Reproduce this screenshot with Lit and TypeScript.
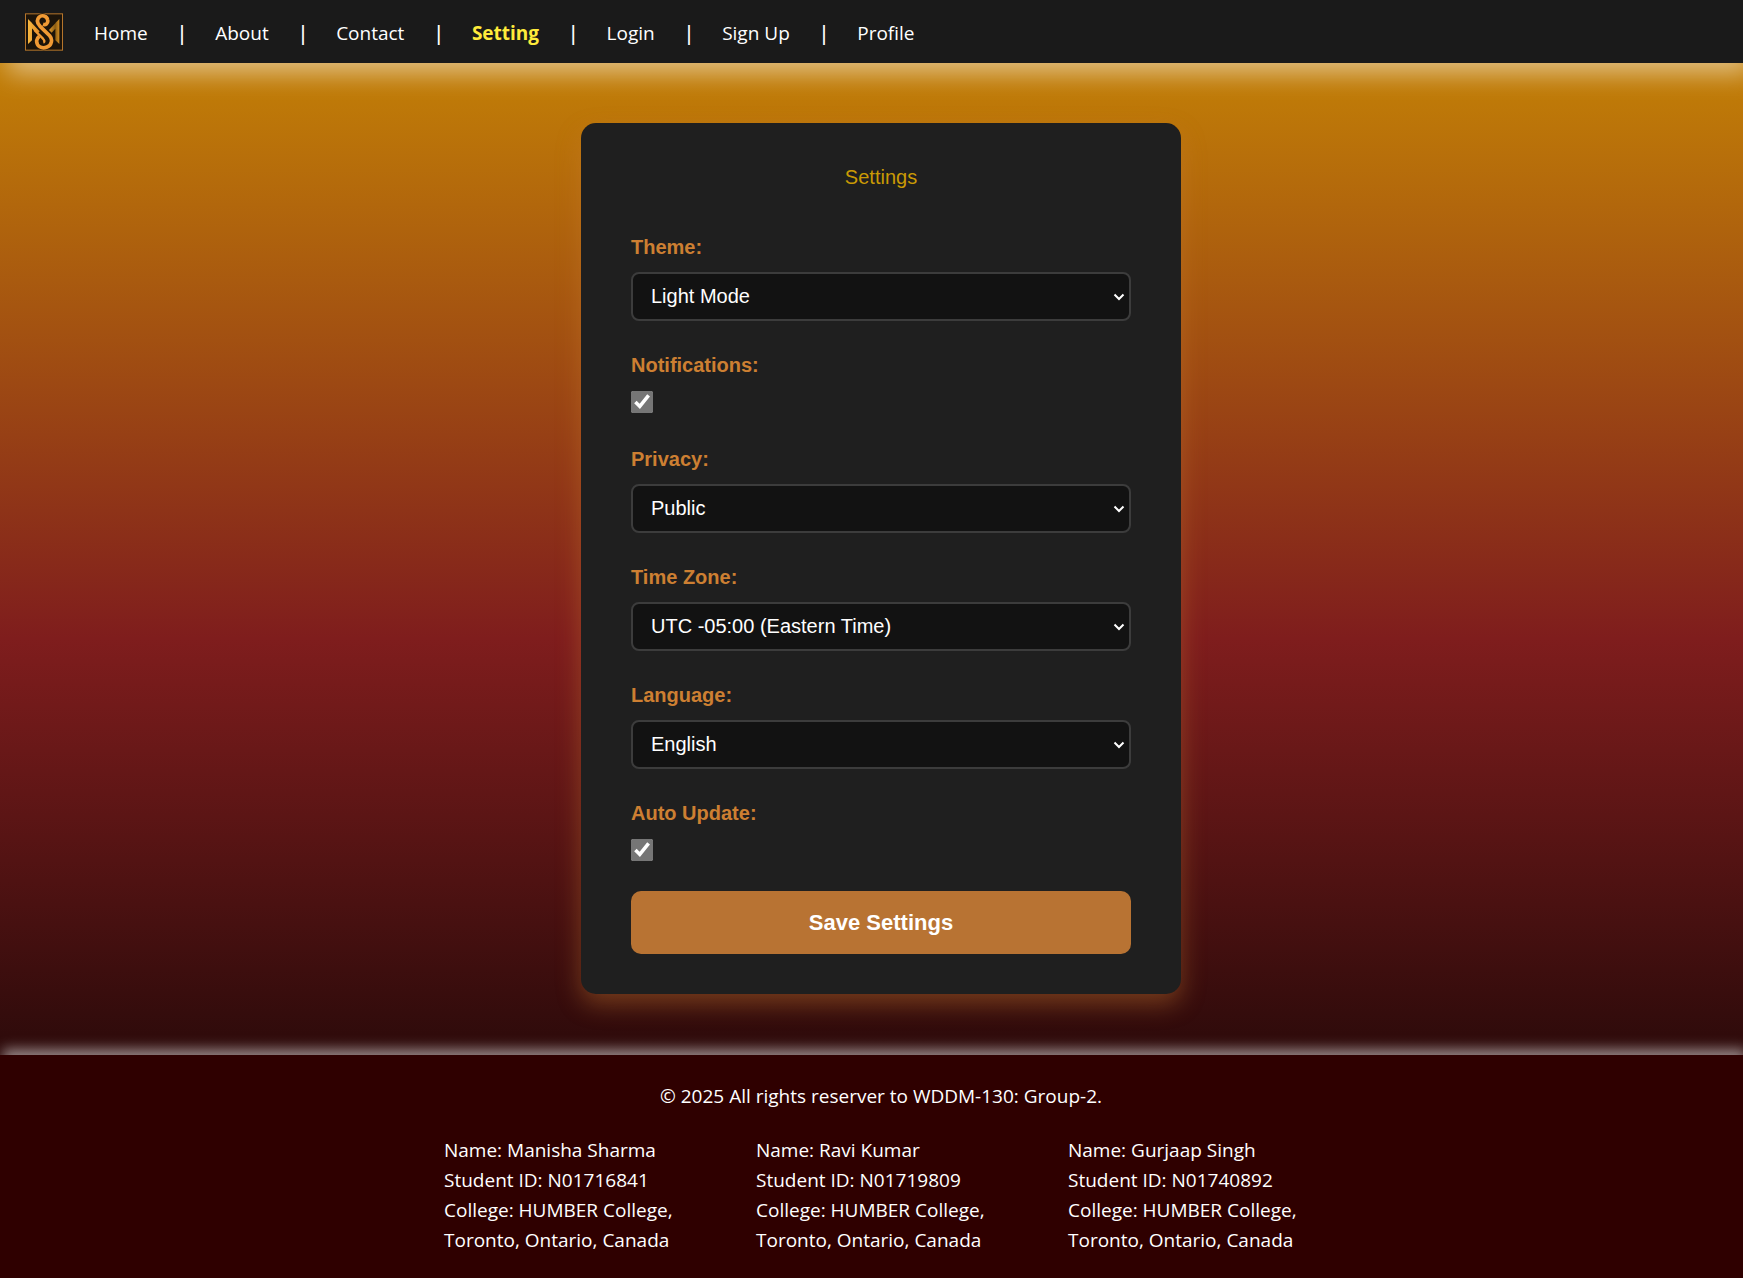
import { LitElement, html, css, svg } from "lit";
import { customElement } from "lit/decorators.js";

const NAV = ["Home", "About", "Contact", "Setting", "Login", "Sign Up", "Profile"];

const STUDENTS = [
  { name: "Manisha Sharma", id: "N01716841" },
  { name: "Ravi Kumar", id: "N01719809" },
  { name: "Gurjaap Singh", id: "N01740892" },
];

type Field = { id: string; label: string; options?: string[] };

const FIELDS: Field[] = [
  { id: "theme", label: "Theme:", options: ["Light Mode"] },
  { id: "notifications", label: "Notifications:" },
  { id: "privacy", label: "Privacy:", options: ["Public"] },
  { id: "timezone", label: "Time Zone:", options: ["UTC -05:00 (Eastern Time)"] },
  { id: "language", label: "Language:", options: ["English"] },
  { id: "auto-update", label: "Auto Update:" },
];

const monogram = svg`
  <defs>
    <linearGradient id="side" x1="0" x2="1" y1="0" y2="0">
      <stop offset="0" stop-color="#f8b840"></stop>
      <stop offset="1" stop-color="#e08a24"></stop>
    </linearGradient>
    <linearGradient id="far" x1="0" x2="1" y1="0" y2="0">
      <stop offset="0" stop-color="#e09a2c"></stop>
      <stop offset="0.6" stop-color="#8a5c12"></stop>
      <stop offset="1" stop-color="#d08c22"></stop>
    </linearGradient>
  </defs>
  <rect x="1.5" y="1.5" width="111" height="109" fill="#1c140a" stroke="#b5752b" stroke-width="3"></rect>
  <path d="M9 17 L21 29 V81 L9 92 Z M9 17 L44 54 L37 62 L9 33 Z" fill="url(#side)"></path>
  <path d="M103 17 L91 29 V81 L103 92 Z M103 17 L72 50 L80 58 L103 33 Z" fill="url(#far)"></path>
  <path d="M54 33 C62 36 70 30 68 20 C66 8 50 3 42 12 C33 22 38 32 46 40 L74 67 C84 78 80 96 66 101 C50 108 34 98 35 82 C36 76 39 72 43 69"
    fill="none" stroke="#1c140a" stroke-width="15"></path>
  <path d="M54 33 C62 36 70 30 68 20 C66 8 50 3 42 12 C33 22 38 32 46 40 L74 67 C84 78 80 96 66 101 C50 108 34 98 35 82 C36 76 39 72 43 69"
    fill="none" stroke="#f09a34" stroke-width="11"></path>
  <path d="M28 50 L54 76 Q62 85 55 88" fill="none" stroke="#f09a34" stroke-width="7"></path>
`;

@customElement("app-root")
export class AppRoot extends LitElement {
  static styles = css`
    :host {
      display: flex;
      flex-direction: column;
      min-height: 100vh;
      background: linear-gradient(180deg, #ca8a04, #7f1d1d 50%, #000);
      color: #fff;
      font-family: "Segoe UI", "Open Sans", "Noto Sans", sans-serif;
      font-size: 19px;
    }
    * {
      box-sizing: border-box;
    }
    .header {
      display: flex;
      align-items: center;
      gap: 31px;
      height: 63px;
      padding: 0 25px;
      background: #1a1a1a;
      box-shadow: 8px 10px 26px rgba(255, 255, 255, 0.5);
    }
    .logo {
      display: block;
      width: 38px;
      height: 38px;
    }
    .menu {
      display: flex;
      align-items: center;
      gap: 29px;
      margin: 0;
      padding: 2px 0 0;
      list-style: none;
      line-height: 30px;
    }
    .item {
      display: flex;
      gap: 28px;
    }
    .item + .item::before {
      content: "|";
      font-weight: 600;
    }
    .link {
      color: #fff;
      text-decoration: none;
    }
    .active {
      color: #ffeb3b;
      font-weight: 700;
    }
    .main {
      display: flex;
      flex: 1;
      justify-content: center;
      align-items: flex-start;
      padding: 60px 0 59px 19px;
    }
    .card {
      width: 600px;
      max-width: 100%;
      padding: 43px 50px 40px;
      border-radius: 15px;
      background: #1f1f1f;
      box-shadow: 0 10px 25px rgba(205, 127, 50, 0.4);
      font-family: Arial, "Liberation Sans", sans-serif;
      font-size: 20px;
      line-height: 23px;
    }
    .title {
      margin: 0 0 47px;
      color: #ca9a04;
      font-size: 20px;
      font-weight: 400;
      text-align: center;
    }
    .form {
      display: flex;
      flex-direction: column;
      gap: 33px;
    }
    .field {
      display: flex;
      flex-direction: column;
      align-items: flex-start;
      gap: 13px;
    }
    .label {
      color: #cd7f32;
      font-weight: 700;
    }
    .picker {
      display: grid;
      align-items: center;
      width: 100%;
    }
    .select {
      grid-area: 1 / 1;
      width: 100%;
      height: 49px;
      padding: 0 30px 0 18px;
      border: 2px solid #3c3c3c;
      border-radius: 8px;
      background: #121212;
      color: #fff;
      font: inherit;
      appearance: none;
    }
    .chevron {
      grid-area: 1 / 1;
      justify-self: end;
      width: 12px;
      height: 8px;
      margin-right: 6px;
      fill: none;
      stroke: #fff;
      stroke-width: 2;
      pointer-events: none;
    }
    .check {
      width: 22px;
      height: 22px;
      margin: 1px 0 2px;
      accent-color: #767676;
    }
    .save {
      height: 63px;
      margin-top: -5px;
      border: 0;
      border-radius: 10px;
      background: #b87333;
      color: #fff;
      font: 700 22px Arial, "Liberation Sans", sans-serif;
    }
    .footer {
      display: flex;
      flex-direction: column;
      align-items: center;
      gap: 24px;
      padding: 26px 0 23px 19px;
      background: #2f0000;
      box-shadow: 3px -6px 12px rgba(255, 255, 255, 0.5);
      line-height: 30px;
    }
    .copy {
      margin: 0;
    }
    .people {
      display: grid;
      grid-template-columns: repeat(3, 250px);
      gap: 62px;
    }
    .person {
      margin: 0;
      white-space: nowrap;
    }
  `;

  private renderField(field: Field) {
    return html`
      <div class="field">
        <label class="label" for=${field.id}>${field.label}</label>
        ${field.options
          ? html`<div class="picker">
              <select class="select" id=${field.id}>
                ${field.options.map((option) => html`<option>${option}</option>`)}
              </select>
              <svg class="chevron" viewBox="0 0 12 8" aria-hidden="true">
                <path d="M1.5 1.5 L6 6 L10.5 1.5"></path>
              </svg>
            </div>`
          : html`<input class="check" id=${field.id} type="checkbox" checked />`}
      </div>
    `;
  }

  render() {
    return html`
      <header class="header">
        <svg class="logo" viewBox="0 0 114 112" aria-hidden="true">${monogram}</svg>
        <nav>
          <ul class="menu">
            ${NAV.map(
              (name) => html`<li class="item">
                <a class="link ${name === "Setting" ? "active" : ""}" href="#">${name}</a>
              </li>`
            )}
          </ul>
        </nav>
      </header>
      <main class="main">
        <section class="card">
          <h1 class="title">Settings</h1>
          <form class="form" @submit=${(event: Event) => event.preventDefault()}>
            ${FIELDS.map((field) => this.renderField(field))}
            <button class="save" type="submit">Save Settings</button>
          </form>
        </section>
      </main>
      <footer class="footer">
        <p class="copy">© 2025 All rights reserver to WDDM-130: Group-2.</p>
        <div class="people">
          ${STUDENTS.map(
            (student) => html`<p class="person">
              Name: ${student.name}<br />
              Student ID: ${student.id}<br />
              College: HUMBER College,<br />
              Toronto, Ontario, Canada
            </p>`
          )}
        </div>
      </footer>
    `;
  }
}
